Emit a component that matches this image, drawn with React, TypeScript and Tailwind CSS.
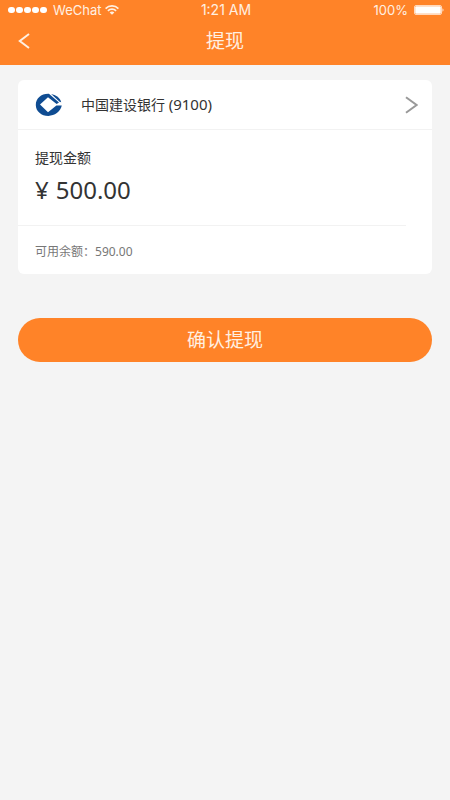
import { useState } from 'react'

const BALANCE = 590

function SignalDots() {
  return (
    <span className="flex gap-[1px]">
      {[0, 1, 2, 3, 4].map((i) => (
        <span key={i} className="h-[6px] w-[7px] rounded-full bg-white" />
      ))}
    </span>
  )
}

function WifiIcon() {
  return (
    <svg width="14" height="10" viewBox="0 0 14 10" fill="none" stroke="currentColor" strokeWidth="1.7">
      <path d="M0.6 3.6C4.2 0 9.8 0 13.4 3.6" />
      <path d="M2.9 5.9C5.2 3.6 8.8 3.6 11.1 5.9" />
      <path d="M4.6 7.4C6 6.1 8 6.1 9.4 7.4L7 9.8Z" fill="currentColor" stroke="none" />
    </svg>
  )
}

function BatteryIcon() {
  return (
    <svg width="30" height="10" viewBox="0 0 30 10" fill="none">
      <rect x="0.5" y="0.5" width="27" height="9" rx="1.5" stroke="#ffd9bd" />
      <rect x="1.2" y="1.2" width="25.6" height="7.6" rx="1" fill="#fff" />
      <path d="M28.4 3.2C30 3.8 30 6.2 28.4 6.8Z" fill="#ffd9bd" />
    </svg>
  )
}

function BankLogo() {
  return (
    <svg width="28" height="24" viewBox="0 0 28 24" fill="none">
      <path
        fill="#0f4c92"
        d="M14.2 0.9C6.6 0.4 0.8 5.4 0.8 11.9C0.8 18.2 6.4 22.9 13.4 22.9C19.6 22.9 25.4 18.8 26.8 12.6L21.4 12.6L13 19.2L5 11.6L13 4.2L21.6 11L24 9.6Z"
      />
      <path d="M16.2 1.1C18.4 1.5 20.6 2.4 22.2 3.6C24.2 5.1 25.6 7 26.2 9.2L24.6 8.8Z" fill="#0f4c92" />
    </svg>
  )
}

export default function App() {
  const [amount, setAmount] = useState('500.00')

  return (
    <div className="flex min-h-screen flex-col bg-[#f4f4f4] font-['Noto_Sans','Noto_Sans_CJK_SC',sans-serif] text-[#333]">
      <header className="bg-[#ff8328] text-[#fff0e2]">
        <div className="grid h-5 grid-cols-3 items-center pr-1.5 pl-2 font-['Inter',sans-serif] text-[13px] leading-5">
          <div className="flex items-center gap-1">
            <SignalDots />
            <span className="flex items-center gap-1 pl-0.5">
              WeChat
              <WifiIcon />
            </span>
          </div>
          <span className="text-center text-sm leading-5">1:21 AM</span>
          <div className="flex items-center justify-end gap-1.5">
            100%
            <BatteryIcon />
          </div>
        </div>
        <div className="grid h-[45px] grid-cols-[48px_1fr_48px] items-center pb-1">
          <button type="button" aria-label="返回" className="flex h-full items-center pl-[18px]">
            <svg width="12" height="16" viewBox="0 0 12 16" fill="none" stroke="currentColor" strokeWidth="2">
              <path d="M11 1L1.8 8L11 15" />
            </svg>
          </button>
          <h1 className="text-center text-[19px] leading-6">提现</h1>
        </div>
      </header>

      <main className="px-[18px] pt-[15px]">
        <section className="rounded-md bg-white">
          <button
            type="button"
            className="flex h-[50px] w-full items-center border-b border-[#f2f2f2] pr-[14px] pl-[17px] text-left"
          >
            <BankLogo />
            <span className="flex-1 pl-[18px] text-sm">
              中国建设银行 <span className="text-[15px]">(9100)</span>
            </span>
            <svg width="13" height="18" viewBox="0 0 13 18" fill="none" stroke="#999" strokeWidth="2">
              <path d="M1 1.2L11.6 9L1 16.8" />
            </svg>
          </button>

          <div className="mr-[26px] h-24 border-b border-[#f2f2f2] pt-[18px] pl-[17px]">
            <label htmlFor="amount" className="block text-sm leading-5">
              提现金额
            </label>
            <div className="flex items-center pt-1.5 text-2xl leading-8">
              <span className="pr-[7px]">¥</span>
              <input
                id="amount"
                inputMode="decimal"
                value={amount}
                onChange={(e) => setAmount(e.target.value)}
                className="h-8 w-full min-w-0 bg-transparent outline-none"
              />
            </div>
          </div>

          <p className="flex h-12 items-center pt-1 pl-[17px] text-xs text-[#777]">可用余额：{BALANCE.toFixed(2)}</p>
        </section>

        <button type="button" className="mt-11 h-11 w-full rounded-full bg-[#ff8328] text-[19px] text-[#fff0e2]">
          确认提现
        </button>
      </main>
    </div>
  )
}
